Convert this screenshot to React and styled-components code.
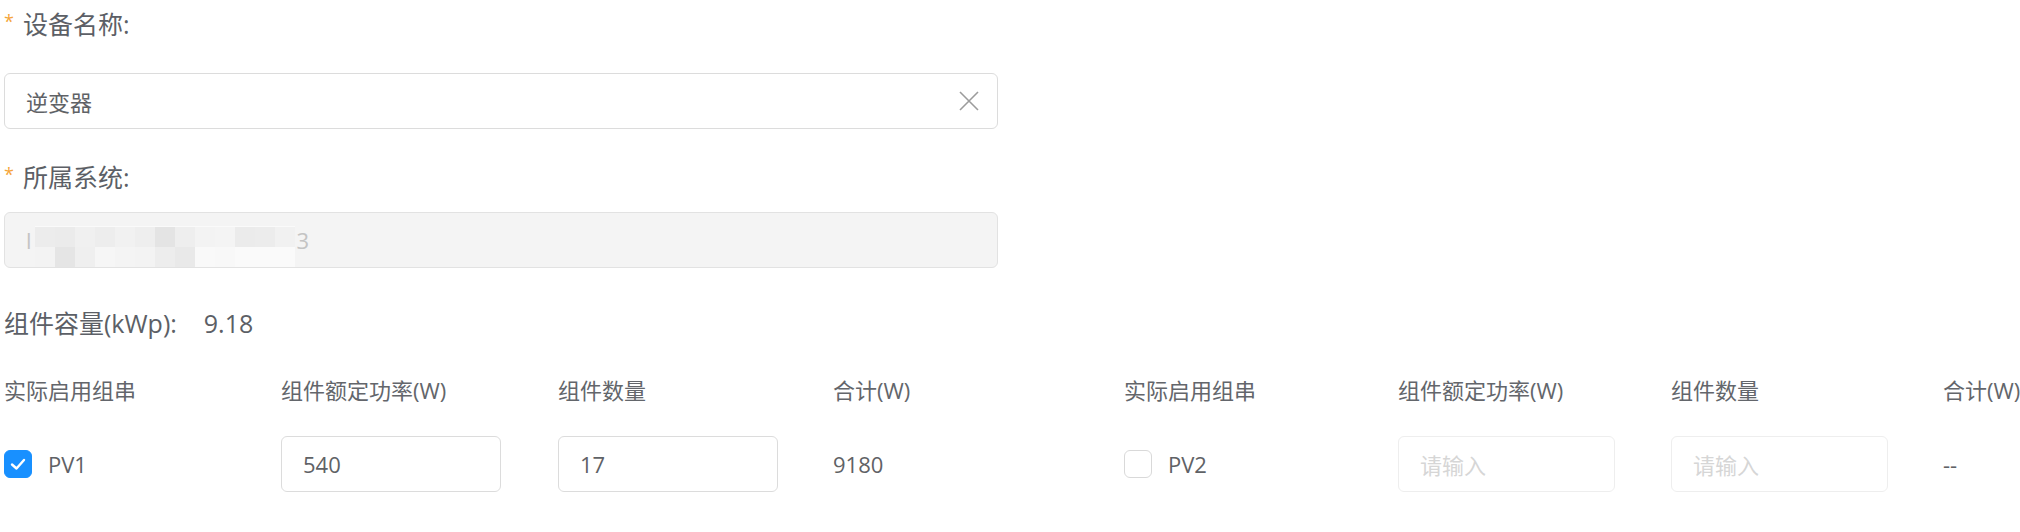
import React from 'react';
import styled, { createGlobalStyle } from 'styled-components';

const Global = createGlobalStyle`
  body {
    margin: 0;
    background: #fff;
    overflow: hidden;
    font-family: "Open Sans", "Noto Sans CJK SC", sans-serif;
    color: #606266;
  }
`

const Page = styled.div`
  width: 2020px;
  padding-left: 4px;
  box-sizing: border-box;
`
const Label = styled.div`
  display: flex;
  align-items: center;
  margin-top: ${p => p.top}px;
  height: 32px;
  font-size: 25px;
  line-height: 32px;
  color: #5c5f66;
`
const Star = styled.span`
  color: #f5a53a;
  font-size: 18px;
  width: 19px;
  align-self: flex-start;
  line-height: 26px;
`
const Field = styled.div`
  display: flex;
  align-items: center;
  box-sizing: border-box;
  width: ${p => p.w || 994}px;
  height: 56px;
  margin-top: ${p => p.top || 0}px;
  padding: 0 18px 0 21px;
  border: 1px solid ${p => (p.disabled ? '#e2e2e2' : p.faint ? '#eeeeee' : '#dcdcdc')};
  border-radius: 6px;
  background: ${p => (p.disabled ? '#f4f4f4' : '#fff')};
  font-size: 22px;
  color: ${p => (p.placeholder ? '#d6d6d6' : '#5f6266')};
`
const FieldText = styled.span`
  flex: 1;
`
const Clear = styled.svg`
  width: 20px;
  height: 20px;
  flex: none;
`
const DimText = styled.span`
  color: #c4c4c4;
  font-size: 22px;
`
const Mosaic = styled.div`
  display: grid;
  grid-template-columns: repeat(13, 20px);
  grid-auto-rows: 20px;
  align-self: flex-end;
  margin: 0 2px 0 3px;
  border-top: 1px solid #fafafa;
`
const Cell = styled.div`
  background: ${p => p.c};
`
const Capacity = styled.div`
  margin-top: 39px;
  font-size: 25px;
  line-height: 32px;
  color: #5c5f66;
`
const CapValue = styled.span`
  margin-left: 27px;
`
const Grid = styled.div`
  display: grid;
  grid-template-columns: 277px 277px 275px 291px 274px 273px 272px 80px;
  margin-top: ${p => p.top}px;
  align-items: center;
  font-size: 22px;
  white-space: nowrap;
`
const Head = styled.div`
  line-height: 28px;
  color: #63666b;
`
const Cellbox = styled.div`
  display: flex;
  align-items: center;
  height: 56px;
`
const Check = styled.span`
  display: flex;
  align-items: center;
  justify-content: center;
  width: 28px;
  height: 28px;
  box-sizing: border-box;
  border-radius: 6px;
  background: ${p => (p.on ? '#1890ff' : '#fff')};
  border: 1px solid ${p => (p.on ? '#1890ff' : '#d9d9d9')};
  margin-right: 16px;
`
const Value = styled.span`
  color: #5f6266;
`

const row1 = ['#ececec', '#ebebeb', '#f0f0f0', '#ededed', '#f1f1f1', '#eeeeee', '#e4e4e4', '#eeeeee', '#f3f3f3', '#f4f4f4', '#ebebeb', '#ececec', '#f1f1f1']
const row2 = ['#f3f3f3', '#e5e5e5', '#efefef', '#f6f6f6', '#f4f4f4', '#f3f3f3', '#ededed', '#e9e9e9', '#f9f9f9', '#f8f8f8', '#fafafa', '#fafafa', '#fafafa']

const heads = ['实际启用组串', '组件额定功率(W)', '组件数量', '合计(W)']

const CheckItem = ({ on, text }) =>
  <Cellbox>
    <Check on={on}>
      {on &&
        <svg width="18" height="18" viewBox="0 0 18 18">
          <polyline points="3,9.5 7.5,13.5 15,5" fill="none" stroke="#fff" strokeWidth="2.4" strokeLinecap="round" strokeLinejoin="round" />
        </svg>}
    </Check>
    <Value>{text}</Value>
  </Cellbox>

const SmallInput = ({ value }) =>
  <Cellbox>
    <Field w={value ? 220 : 217} faint={!value} placeholder={!value}>
      <FieldText>{value || '请输入'}</FieldText>
    </Field>
  </Cellbox>

export default function App() {
  return (
    <Page>
      <Global />
      <Label top={8}><Star>*</Star>设备名称:</Label>
      <Field top={33}>
        <FieldText>逆变器</FieldText>
        <Clear viewBox="0 0 20 20">
          <path d="M1 1L19 19M19 1L1 19" stroke="#9c9c9c" strokeWidth="1.6" fill="none" />
        </Clear>
      </Field>
      <Label top={32}><Star>*</Star>所属系统:</Label>
      <Field top={19} disabled>
        <DimText>l</DimText>
        <Mosaic>
          {row1.concat(row2).map((c, i) => <Cell key={i} c={c} />)}
        </Mosaic>
        <DimText>3</DimText>
      </Field>
      <Capacity>组件容量(kWp):<CapValue>9.18</CapValue></Capacity>
      <Grid top={37}>
        {heads.concat(heads).map((h, i) => <Head key={i}>{h}</Head>)}
      </Grid>
      <Grid top={32}>
        <CheckItem on text="PV1" />
        <SmallInput value="540" />
        <SmallInput value="17" />
        <Value>9180</Value>
        <CheckItem text="PV2" />
        <SmallInput />
        <SmallInput />
        <Value>--</Value>
      </Grid>
    </Page>
  );
}
